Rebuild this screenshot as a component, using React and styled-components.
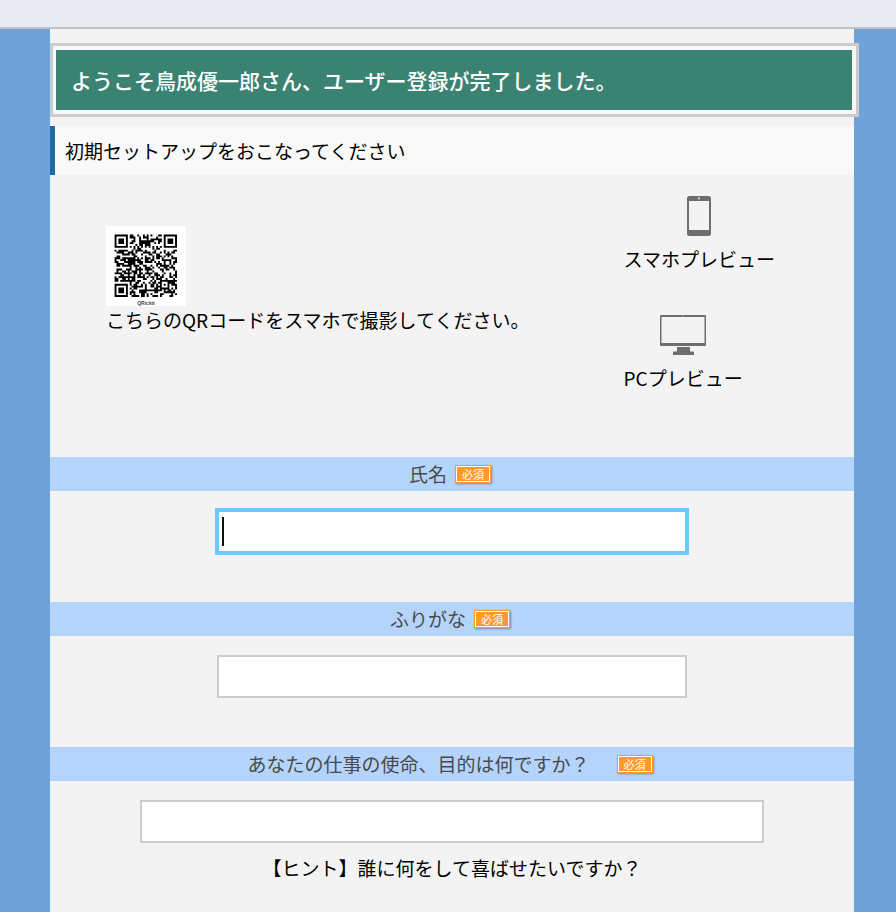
import React from 'react';
import styled, { createGlobalStyle } from 'styled-components';

const GlobalStyle = createGlobalStyle`
    * {
        box-sizing: border-box;
    }

    body {
        margin: 0;
        background-color: #6ea2d8;
        color: #000;
        font-family: "Noto Sans CJK JP", sans-serif;
        font-size: 19px;
        line-height: 28px;
    }

    h1, h2, p {
        margin: 0;
        font-weight: 400;
    }
`

const QR_SIZE = 33;

// ring pattern shared by the three finder squares and the alignment square
const ring = (x, y, cx, cy, radius) => {
    const d = Math.max(Math.abs(x - cx), Math.abs(y - cy));
    if (d > radius) return null;
    if (radius === 4) return d === 3 || d <= 1;
    return d !== 1;
};

const isDark = (x, y) => {
    const marks = [
        ring(x, y, 3, 3, 4),
        ring(x, y, QR_SIZE - 4, 3, 4),
        ring(x, y, 3, QR_SIZE - 4, 4),
        ring(x, y, 26, 26, 2),
    ];
    const mark = marks.find((m) => m !== null);
    if (mark !== undefined) return mark;
    if (x === 6 || y === 6) return (x + y) % 2 === 0;
    const n = Math.sin(x * 12.9898 + y * 78.233) * 43758.5453;
    return n - Math.floor(n) < 0.54;
};

const QrCode = () => {
    let d = '';
    for (let y = 0; y < QR_SIZE; y++) {
        for (let x = 0; x < QR_SIZE; x++) {
            if (isDark(x, y)) d += `M${x} ${y}h1v1h-1z`;
        }
    }
    return (
        <svg width="80" height="80" viewBox="0 0 80 80" role="img" aria-label="QR">
            <rect width="80" height="80" fill="#fff" />
            <path d={d} fill="#000" transform="translate(8.6 8.6) scale(1.89)" />
            <text x="40" y="79" textAnchor="middle" fontSize="5" fontWeight="700" fontFamily="Liberation Sans, sans-serif" fill="#444">QRickit</text>
        </svg>
    );
};

const PhoneIcon = () => (
    <svg width="24" height="40" viewBox="0 0 24 40" aria-hidden="true">
        <rect width="24" height="40" rx="2.5" fill="#6d6e70" />
        <rect x="2" y="5" width="20" height="29" fill="#f3f3f3" />
        <circle cx="12" cy="2.4" r="1.1" fill="#ddd" />
    </svg>
);

const MonitorIcon = () => (
    <svg width="46" height="40" viewBox="0 0 46 40" aria-hidden="true">
        <rect width="46" height="31" rx="1" fill="#6d6e70" />
        <rect x="1.5" y="2" width="43" height="26" fill="#f3f3f3" />
        <circle cx="23" cy="1" r="0.6" fill="#ddd" />
        <path d="M17 32h13v4.5h3q1 0 1 1V40H13v-2.5q0-1 1-1h3z" fill="#6d6e70" />
    </svg>
);

const Field = ({ id, label, wide, focused, hint }) => (
    <StyledField>
        <FieldBar>
            <label htmlFor={id}>{label}</label>
            <Badge>必須</Badge>
        </FieldBar>
        <InputWrap $wide={wide}>
            <TextInput id={id} type="text" required $focused={focused} />
            {focused && <Caret />}
        </InputWrap>
        {hint && <Hint>{hint}</Hint>}
    </StyledField>
);

const App = () => {
    return (
        <>
            <GlobalStyle />
            <TopBar />
            <Page>
                <Welcome>
                    <h1>ようこそ鳥成優一郎さん、ユーザー登録が完了しました。</h1>
                </Welcome>
                <SetupTitle>初期セットアップをおこなってください</SetupTitle>
                <Previews>
                    <QrBlock>
                        <QrCode />
                        <p>こちらのQRコードをスマホで撮影してください。</p>
                    </QrBlock>
                    <PreviewLinks>
                        <PreviewLink href="#sp">
                            <PhoneIcon />
                            スマホプレビュー
                        </PreviewLink>
                        <PreviewLink href="#pc">
                            <MonitorIcon />
                            PCプレビュー
                        </PreviewLink>
                    </PreviewLinks>
                </Previews>
                <form>
                    <Field id="name" label="氏名" focused />
                    <Field id="kana" label="ふりがな" />
                    <Field
                        id="mission"
                        label="あなたの仕事の使命、目的は何ですか？　"
                        wide
                        hint="【ヒント】誰に何をして喜ばせたいですか？"
                    />
                </form>
            </Page>
        </>
    );
}

const TopBar = styled.header`
    height: 29px;
    background-color: #e8ebf1;
    border-bottom: 2px solid #c0c3c4;
`
const Page = styled.main`
    margin: 0 42px 0 50px;
    padding-top: 14px;
    min-height: calc(100vh - 29px);
    background-color: #f3f3f3;
`
const Welcome = styled.div`
    margin-right: -5px;
    padding: 4px 4px 4px 3px;
    border: 3px solid #cbcbcb;
    background-color: #f8f8f8;

    h1 {
        padding: 16px 15px;
        background-color: #3a8373;
        color: #fff;
        font-size: 21px;
        font-weight: 500;
        line-height: 28px;
    }
`
const SetupTitle = styled.h2`
    margin-top: 9px;
    padding: 10px;
    border-left: 5px solid #1f6ba3;
    background-color: #f9f9f9;
    font-size: 19px;
    line-height: 29px;
`
const Previews = styled.section`
    display: flex;
    justify-content: space-between;
    padding: 21px 79px 65px 56px;
`
const QrBlock = styled.div`
    padding-top: 30px;

    svg {
        display: block;
    }
`
const PreviewLinks = styled.nav`
    display: flex;
    flex-direction: column;
    align-items: flex-start;
    gap: 42px;
`
const PreviewLink = styled.a`
    display: flex;
    flex-direction: column;
    align-items: center;
    gap: 9px;
    color: #000;
    text-decoration: none;
`
const StyledField = styled.div`
    padding-bottom: 49px;
`
const FieldBar = styled.div`
    display: flex;
    align-items: center;
    justify-content: center;
    gap: 8px;
    height: 34px;
    padding-right: 4px;
    background-color: #b4d4fb;
    color: #4a4a4a;
`
const Badge = styled.span`
    padding: 0 6px;
    border: 1px solid #ff9a2a;
    background-color: #ff9a2a;
    box-shadow: inset 0 0 0 1px #fff, 1px 1px 2px #8a8a8a;
    color: #fff;
    font-size: 11px;
    line-height: 16px;
`
const InputWrap = styled.div`
    position: relative;
    width: ${(props) => (props.$wide ? '624px' : '470px')};
    max-width: 100%;
    margin: 19px auto 0;
`
const TextInput = styled.input`
    display: block;
    width: 100%;
    height: 43px;
    padding: 0 6px;
    border: 2px solid ${(props) => (props.$focused ? '#6cf' : '#ccc')};
    outline: ${(props) => (props.$focused ? '2px solid #6cf' : 'none')};
    border-radius: 0;
    background-color: #fff;
    font: inherit;
`
const Caret = styled.span`
    position: absolute;
    top: 7px;
    left: 5px;
    width: 2px;
    height: 29px;
    background-color: #111;
`
const Hint = styled.p`
    margin-top: 11px;
    text-align: center;
`
export default App;
